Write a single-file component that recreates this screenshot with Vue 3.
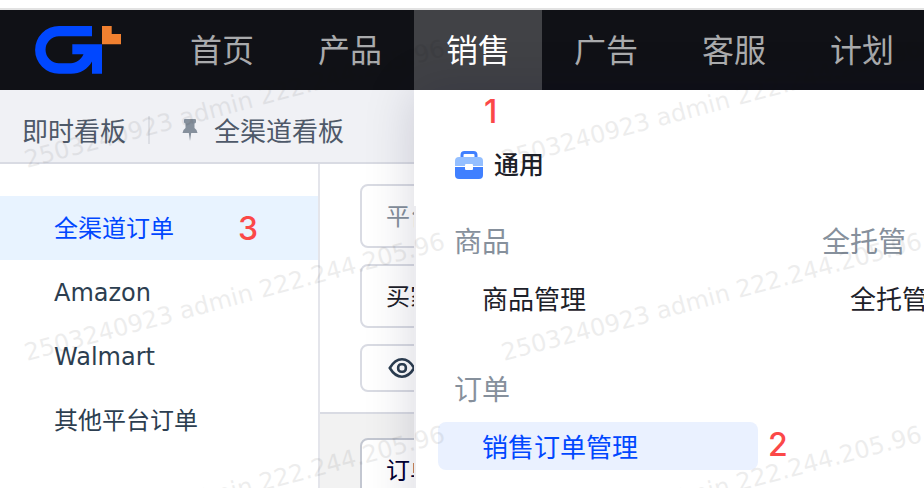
<script setup>
const navItems = [
  { name: '首页' },
  { name: '产品' },
  { name: '销售', active: true },
  { name: '广告' },
  { name: '客服' },
  { name: '计划' },
]

const menuColumns = [
  [
    { title: '商品', link: '商品管理' },
    { title: '订单', link: '销售订单管理', active: true },
  ],
  [{ title: '全托管', link: '全托管' }],
]

const channels = [
  { name: '全渠道订单', active: true },
  { name: 'Amazon' },
  { name: 'Walmart' },
  { name: '其他平台订单' },
]

const markText = '2503240923 admin 222.244.205.96'
</script>

<template>
  <div class="page">
    <header class="topbar">
      <a class="logo" href="#" aria-label="G+">
        <svg width="86" height="48" viewBox="0 0 86 48">
          <path fill="#0047ff" d="M57 0H24A23.9 23.9 0 0 0 24 47.8H36C45 47.8 53 43 57 35.5V47.8H67V18.3H37.3V28.3H48.5C46 34 41 37.2 36 37.2H24A13.4 13.4 0 0 1 24 10.3H57Z" />
          <path fill="#f08030" d="M67 0H76.7V8H86V18.3H67Z" />
        </svg>
      </a>
      <nav class="nav">
        <div v-for="item in navItems" :key="item.name" class="nav-cell">
          <a href="#" class="nav-link" :class="{ active: item.active }">{{ item.name }}</a>
          <section v-if="item.active" class="mega">
            <h2 class="mega-head">
              <svg width="28" height="28" viewBox="0 0 28 28">
                <path d="M7 7V4Q7 1.500 9.500 1.500H18.500Q21 1.500 21 4V7" fill="none" stroke="#4080ff" stroke-width="3" />
                <path d="M4 6H24Q28 6 28 10V15H0V10Q0 6 4 6Z" fill="#94bfff" />
                <path d="M0 16H28V24Q28 28 24 28H4Q0 28 0 24Z" fill="#4080ff" />
                <rect x="10" y="13" width="8" height="6" rx="1" fill="#fff" />
              </svg>
              <span>通用</span>
            </h2>
            <div class="mega-body">
              <div v-for="(col, i) in menuColumns" :key="i" class="mega-col">
                <div v-for="group in col" :key="group.title" class="group">
                  <h3 class="group-title">{{ group.title }}</h3>
                  <a href="#" class="group-link" :class="{ active: group.active }">{{ group.link }}</a>
                </div>
              </div>
            </div>
            <span class="step step-first">1</span>
            <span class="step step-second">2</span>
          </section>
        </div>
      </nav>
    </header>

    <div class="boards">
      <a href="#" class="board">即时看板</a>
      <span class="rule"></span>
      <svg class="pin" width="16" height="22" viewBox="0 0 16 22">
        <path fill="#86909c" d="M3 0H13Q14 0 14 1V3Q14 4 12.500 4.500V9Q15 10.500 15.500 14H9.200L8 22L6.800 14H.5Q1 10.500 3.500 9V4.500Q2 4 2 3V1Q2 0 3 0Z" />
      </svg>
      <a href="#" class="board">全渠道看板</a>
    </div>

    <div class="work">
      <aside class="side">
        <a v-for="c in channels" :key="c.name" href="#" class="side-link" :class="{ active: c.active }">{{ c.name }}</a>
        <span class="step step-third">3</span>
      </aside>
      <main class="main">
        <form class="filters">
          <input class="field" type="text" placeholder="平台" aria-label="平台" />
          <select class="field" aria-label="买家">
            <option>买家</option>
          </select>
          <button class="field view" type="button" aria-label="查看">
            <svg width="28" height="20" viewBox="0 0 28 20" fill="none" stroke="#2c3e50" stroke-width="2.600">
              <path d="M1.800 10Q7 1.300 14 1.300T26.200 10Q21 18.700 14 18.700T1.800 10Z" />
              <rect x="10.200" y="6.200" width="7.600" height="7.600" rx="3" />
            </svg>
          </button>
        </form>
        <div class="list">
          <select class="field order" aria-label="订单">
            <option>订单</option>
          </select>
        </div>
      </main>
    </div>

    <div class="marks" aria-hidden="true">
      <div v-for="row in 4" :key="row" class="mark-row">
        <span v-for="n in 2" :key="n" class="mark">{{ markText }}</span>
      </div>
    </div>
  </div>
</template>

<style>
body {
  margin: 0;
  background: #fff;
}
</style>

<style scoped>
.page {
  position: relative;
  display: flex;
  flex-direction: column;
  box-sizing: border-box;
  height: 100vh;
  padding-top: 8px;
  overflow: hidden;
  background: #fff;
  font-family: "DejaVu Sans", "Noto Sans CJK SC", sans-serif;
  font-size: 24px;
  color: #2c3e50;
}

a {
  color: inherit;
  text-decoration: none;
}

h2,
h3 {
  margin: 0;
}

.topbar {
  position: relative;
  z-index: 2;
  display: flex;
  flex: none;
  align-items: center;
  gap: 37px;
  height: 80px;
  padding-left: 35px;
  border-top: 2px solid #e2e2e2;
  background: #101116;
}

.logo {
  display: flex;
  flex: none;
}

.nav {
  display: flex;
}

.nav-cell {
  position: relative;
  flex: none;
}

.nav-link {
  display: block;
  padding: 0 32px 4px;
  font-family: "Noto Sans CJK SC", sans-serif;
  font-size: 32px;
  line-height: 76px;
  color: #a9aaac;
}

.nav-link.active {
  background: #414246;
  color: #fff;
}

.mega {
  position: absolute;
  top: 100%;
  left: 0;
  display: flex;
  flex-direction: column;
  box-sizing: border-box;
  width: max-content;
  height: 100vh;
  padding-top: 55px;
  background: #fff;
  box-shadow: 0 0 48px rgba(0, 10, 50, 0.16);
  font-family: "Noto Sans CJK SC", sans-serif;
}

.mega-head {
  display: flex;
  align-items: center;
  gap: 11px;
  height: 40px;
  margin-bottom: 21px;
  padding-left: 41px;
  font-size: 25px;
  font-weight: 500;
  line-height: 36px;
  color: #1d2129;
}

.mega-head span {
  padding-bottom: 4px;
}

.mega-body {
  display: flex;
  flex: 1;
  gap: 48px;
  padding: 14px 24px 0 22px;
  border-left: 2px solid #ececf0;
}

.mega-col {
  display: flex;
  flex-direction: column;
  gap: 46px;
  width: 320px;
}

.group {
  display: flex;
  flex-direction: column;
  gap: 14px;
}

.group-title {
  padding-left: 16px;
  font-size: 28px;
  font-weight: 400;
  line-height: 40px;
  color: #86909c;
}

.group-link {
  padding-left: 44px;
  border-radius: 8px;
  font-size: 26px;
  line-height: 48px;
  color: #1d2129;
}

.group-link.active {
  background: #eaf1ff;
  color: #0047ff;
}

.boards {
  display: flex;
  flex: none;
  align-items: center;
  height: 64px;
  padding: 8px 22px 0;
  border-bottom: 2px solid #d9dbe3;
  background: #f0f1f5;
  font-family: "Noto Sans CJK SC", sans-serif;
  font-size: 26px;
  color: #4e5969;
}

.board {
  padding-bottom: 2px;
}

.rule {
  width: 2px;
  height: 28px;
  margin: 0 32px 0 22px;
  background: #dcdee4;
}

.pin {
  margin-right: 16px;
}

.work {
  display: flex;
  flex: 1;
  min-height: 0;
}

.side {
  position: relative;
  flex: none;
  width: 318px;
  padding-top: 32px;
  border-right: 2px solid #e4e5eb;
}

.side-link {
  display: block;
  padding: 2px 0 0 54px;
  line-height: 62px;
}

.side-link.active {
  background: #e8f3ff;
  color: #0047ff;
}

.main {
  display: flex;
  flex: 1;
  flex-direction: column;
}

.filters {
  display: flex;
  flex-direction: column;
  gap: 16px;
  padding: 20px 40px;
  border-bottom: 2px solid #d9dbe3;
}

.field {
  box-sizing: border-box;
  width: 100%;
  height: 64px;
  margin: 0;
  padding: 0 24px 3px;
  border: 2px solid #d9dbe3;
  border-radius: 8px;
  appearance: none;
  background: #fff;
  font-family: "Noto Sans CJK SC", sans-serif;
  font-size: 24px;
  color: #1d2129;
}

.field::placeholder {
  color: #86909c;
  opacity: 1;
}

.view {
  display: flex;
  align-items: center;
  height: 48px;
  padding: 0 26px;
}

.list {
  flex: 1;
  padding: 24px 40px;
  background: #f2f2f2;
}

.order {
  border-color: #c3c7d1;
  color: #000033;
}

.step {
  position: absolute;
  font-family: Inter, sans-serif;
  font-size: 32px;
  font-weight: 500;
  line-height: 40px;
  color: #fb4848;
}

.step-first {
  top: 2px;
  left: 70px;
}

.step-second {
  top: 335px;
  left: 354px;
}

.step-third {
  top: 45px;
  left: 238px;
}

.marks {
  position: absolute;
  inset: 0;
  z-index: 3;
  overflow: hidden;
  opacity: 0.07;
  pointer-events: none;
}

.mark-row {
  display: flex;
  height: 193px;
}

.mark {
  flex: none;
  width: 450px;
  height: 28px;
  margin-top: 146px;
  padding-left: 27px;
  font-size: 24px;
  line-height: 28px;
  white-space: nowrap;
  color: #111;
  transform: rotate(-15deg);
  transform-origin: 27px 22px;
}
</style>
